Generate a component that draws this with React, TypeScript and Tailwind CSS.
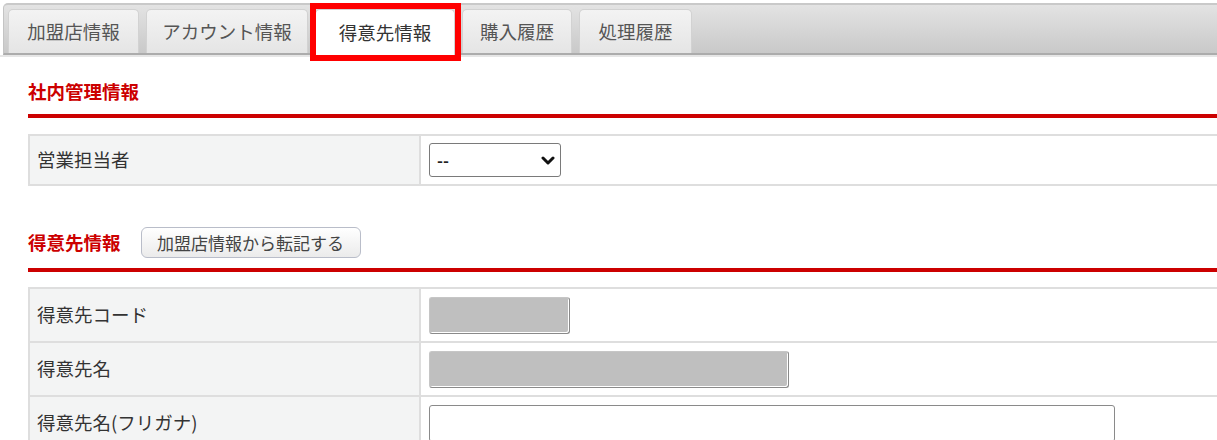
import React from "react"

const tabs = [
  { label: "加盟店情報", width: "w-[131px]" },
  { label: "アカウント情報", width: "w-[162px]" },
  { label: "得意先情報", width: "w-[140px]", active: true },
  { label: "購入履歴", width: "w-[110px]" },
  { label: "処理履歴", width: "w-[113px]" },
]

function TabBar() {
  return (
    <div className="relative pt-[3px]">
      <div className="ml-[3px] h-[52px] rounded-tl-[5px] border-l border-t-2 border-b-2 border-l-[#c4c4c4] border-t-[#c9c9c9] border-b-[#acacac] bg-gradient-to-b from-[#e3e3e3] to-[#c9c9c9] flex items-end gap-[7px] pl-[4px]">
        {tabs.map((tab) => (
          <div
            key={tab.label}
            className={`${tab.width} shrink-0 flex items-center justify-center rounded-t-[5px] border border-b-0 border-[#d2d2d2] ${
              tab.active
                ? "bg-white text-[#333] -mb-[2px] h-[46px]"
                : "h-[44px] bg-gradient-to-b from-[#f3f3f3] to-[#e5e5e5] text-[#555]"
            }`}
          >
            <span className="text-[18.5px] leading-none">{tab.label}</span>
          </div>
        ))}
      </div>
      <div className="h-[2px] bg-[#e6e6e6]" />
      {/* annotation frame */}
      <div className="absolute left-[310px] top-[3px] w-[151px] h-[58px] border-[6px] border-[#ff0000]" />
    </div>
  )
}

function Row({ label, children, h }: { label: string; children?: React.ReactNode; h: string }) {
  return (
    <div className={`flex border-b-2 border-[#dedede] ${h}`}>
      <div className="w-[391px] shrink-0 bg-[#f3f4f4] border-r-2 border-[#dedede] flex items-center pl-[7px] text-[#333] text-[18.5px]">
        {label}
      </div>
      <div className="flex-1 flex items-center pl-[8px] bg-white">{children}</div>
    </div>
  )
}

function Chevron() {
  return (
    <svg width="14" height="9" viewBox="0 0 14 9" className="absolute right-[6px] top-[13px] pointer-events-none">
      <path d="M2 2 L7 7 L12 2" fill="none" stroke="#111" strokeWidth="3" strokeLinecap="round" strokeLinejoin="round" />
    </svg>
  )
}

export default function App() {
  return (
    <div className="w-[1217px] h-[440px] overflow-hidden bg-white font-['Noto_Sans_CJK_JP','Noto_Sans',sans-serif]">
      <TabBar />

      <div className="pl-[28px] w-[1260px]">
        {/* 社内管理情報 */}
        <div className="mt-[22px] h-[26px] flex items-center text-[18.5px] font-bold text-[#cc0000]">社内管理情報</div>
        <div className="mt-[9px] h-[4px] bg-[#cc0000]" />
        <div className="mt-[16px] border-t-2 border-l-2 border-[#dedede]">
          <Row label="営業担当者" h="h-[50px]">
            <div className="relative">
              <select className="appearance-none w-[132px] h-[34px] rounded-[3px] border border-[#7a7a7a] bg-white pl-[7px] text-[16px] font-bold text-[#222] outline-none">
                <option>--</option>
              </select>
              <Chevron />
            </div>
          </Row>
        </div>

        {/* 得意先情報 */}
        <div className="mt-[41px] h-[31px] flex items-center">
          <span className="text-[18.5px] font-bold text-[#cc0000]">得意先情報</span>
          <button className="ml-[20px] w-[220px] h-[31px] rounded-[6px] border border-[#b9bdc9] bg-gradient-to-b from-white to-[#ebebeb] text-[17px] text-[#444] leading-none">
            加盟店情報から転記する
          </button>
        </div>
        <div className="mt-[10px] h-[4px] bg-[#cc0000]" />
        <div className="mt-[15px] border-t-2 border-l-2 border-[#dedede]">
          <Row label="得意先コード" h="h-[54px]">
            <div className="w-[141px] h-[37px] rounded-[3px] bg-[#bfbfbf] border border-[#c6c6c6] border-r-[#8a8a8a] border-b-[#8a8a8a] shadow-[inset_-1px_-1px_0_#fff]" />
          </Row>
          <Row label="得意先名" h="h-[54px]">
            <div className="w-[360px] h-[37px] rounded-[3px] bg-[#bfbfbf] border border-[#c6c6c6] border-r-[#8a8a8a] border-b-[#8a8a8a] shadow-[inset_-1px_-1px_0_#fff]" />
          </Row>
          <Row label="得意先名(フリガナ)" h="h-[54px]">
            <input className="w-[686px] h-[37px] rounded-[3px] border border-[#8a8a8a] bg-white outline-none" />
          </Row>
        </div>
      </div>
    </div>
  )
}
